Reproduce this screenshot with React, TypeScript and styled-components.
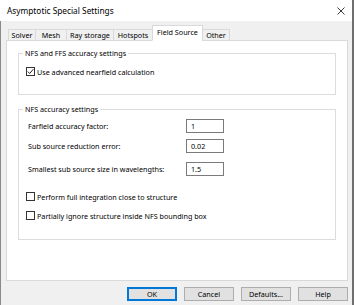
import React from 'react';
import styled, { createGlobalStyle } from 'styled-components';

const GlobalStyle = createGlobalStyle`
  html, body {
    margin: 0;
    padding: 0;
    background: #f0f0f0;
  }
  body {
    font-family: 'Noto Sans', 'DejaVu Sans', sans-serif;
    font-size: 7.2px;
    color: #000;
  }
`;

const Window = styled.div`
  width: 354px;
  height: 305px;
  display: flex;
  flex-direction: column;
  box-sizing: border-box;
  border-right: 2px solid #6f6f6f;
  overflow: hidden;
`;

const TitleBar = styled.div`
  height: 21px;
  flex: none;
  display: flex;
  align-items: center;
  justify-content: space-between;
  padding: 0 7px;
  background: #fff;
  font-size: 8.3px;
`;

const Body = styled.div`
  flex: 1;
  display: flex;
  flex-direction: column;
  padding: 4px 5px 0 5px;
  border-left: 1px solid #8a8a8a;
  background: #f0f0f0;
`;

const TabStrip = styled.div`
  display: flex;
  align-items: flex-end;
  padding-left: 3px;
  height: 16px;
  position: relative;
  z-index: 1;
  margin-bottom: -1px;
`;

const Tab = styled.div<{ $active?: boolean; $width: number }>`
  box-sizing: border-box;
  width: ${(p) => p.$width}px;
  height: ${(p) => (p.$active ? '16px' : '12px')};
  display: flex;
  align-items: center;
  justify-content: center;
  border: 1px solid #d9d9d9;
  border-bottom: ${(p) => (p.$active ? '1px solid #fff' : '1px solid #d9d9d9')};
  background: ${(p) => (p.$active ? '#fff' : '#f0f0f0')};
  margin-left: -1px;
  padding-bottom: ${(p) => (p.$active ? '2px' : '0')};
  white-space: nowrap;
`;

const Panel = styled.div`
  height: 241px;
  box-sizing: border-box;
  background: #fff;
  border: 1px solid #d9d9d9;
  padding: 7px 11px 0 11px;
  width: 342px;
`;

const Group = styled.fieldset<{ $gap?: number; $top: number; $bottom: number }>`
  margin: ${(p) => p.$gap ?? 0}px 0 0 0;
  border: 1px solid #dcdcdc;
  padding: ${(p) => p.$top}px 7px ${(p) => p.$bottom}px 7px;
  min-width: 0;

  legend {
    padding: 0 2px;
    margin-left: -3px;
    line-height: 10px;
  }
`;

const CheckRow = styled.label<{ $gap?: number }>`
  display: flex;
  align-items: center;
  height: 13px;
  gap: 2px;
  margin-top: ${(p) => p.$gap ?? 0}px;
  white-space: nowrap;
`;

const Box = styled.span`
  width: 9px;
  height: 9px;
  box-sizing: border-box;
  border: 1px solid #333;
  background: #fff;
  display: flex;
  align-items: center;
  justify-content: center;
`;

const FieldRow = styled.div<{ $gap: number }>`
  display: flex;
  align-items: center;
  height: 14px;
  margin: ${(p) => p.$gap}px 0 0 2px;
`;

const FieldLabel = styled.span`
  width: 158px;
  white-space: nowrap;
`;

const Input = styled.div`
  width: 38px;
  height: 14px;
  box-sizing: border-box;
  border: 1px solid #7a7a7a;
  background: #fff;
  padding-left: 4px;
  display: flex;
  align-items: center;
`;

const ButtonBar = styled.div`
  display: flex;
  justify-content: flex-end;
  gap: 7px;
  margin-top: 6px;
  margin-right: -1px;
`;

const Button = styled.div<{ $primary?: boolean }>`
  width: 50px;
  height: 14px;
  box-sizing: border-box;
  display: flex;
  align-items: center;
  justify-content: center;
  background: #e1e1e1;
  border: 1px solid ${(p) => (p.$primary ? '#0078d7' : '#adadad')};
  box-shadow: ${(p) => (p.$primary ? 'inset 0 0 0 1px #0078d7' : 'none')};
`;

const Check = ({ checked }: { checked?: boolean }) => (
  <Box>
    {checked && (
      <svg width="7" height="7" viewBox="0 0 7 7">
        <path d="M0.8 3.6 L2.7 5.5 L6.3 1.2" fill="none" stroke="#222" strokeWidth="1" />
      </svg>
    )}
  </Box>
);

const CloseIcon = () => (
  <svg width="8" height="8" viewBox="0 0 8 8">
    <path d="M0.5 0.5 L7.5 7.5 M7.5 0.5 L0.5 7.5" stroke="#222" strokeWidth="0.9" />
  </svg>
);

const tabs = [
  { name: 'Solver', width: 28 },
  { name: 'Mesh', width: 32 },
  { name: 'Ray storage', width: 48 },
  { name: 'Hotspots', width: 40 },
  { name: 'Field Source', width: 51 },
  { name: 'Other', width: 28 },
];

const fields = [
  { label: 'Farfield accuracy factor:', value: '1', gap: 0 },
  { label: 'Sub source reduction error:', value: '0.02', gap: 6 },
  { label: 'Smallest sub source size in wavelengths:', value: '1.5', gap: 9 },
];

export default function App() {
  return (
    <>
      <GlobalStyle />
      <Window>
        <TitleBar>
          <span>Asymptotic Special Settings</span>
          <CloseIcon />
        </TitleBar>
        <Body>
          <TabStrip>
            {tabs.map((t) => (
              <Tab key={t.name} $width={t.width} $active={t.name === 'Field Source'}>
                {t.name}
              </Tab>
            ))}
          </TabStrip>
          <Panel>
            <Group $top={7} $bottom={16}>
              <legend>NFS and FFS accuracy settings</legend>
              <CheckRow>
                <Check checked />
                Use advanced nearfield calculation
              </CheckRow>
            </Group>
            <Group $gap={9} $top={5} $bottom={17}>
              <legend>NFS accuracy settings</legend>
              {fields.map((f) => (
                <FieldRow key={f.label} $gap={f.gap}>
                  <FieldLabel>{f.label}</FieldLabel>
                  <Input>{f.value}</Input>
                </FieldRow>
              ))}
              <CheckRow $gap={14}>
                <Check />
                Perform full integration close to structure
              </CheckRow>
              <CheckRow $gap={6}>
                <Check />
                Partially ignore structure inside NFS bounding box
              </CheckRow>
            </Group>
          </Panel>
          <ButtonBar>
            <Button $primary>OK</Button>
            <Button>Cancel</Button>
            <Button>Defaults...</Button>
            <Button>Help</Button>
          </ButtonBar>
        </Body>
      </Window>
    </>
  );
}
